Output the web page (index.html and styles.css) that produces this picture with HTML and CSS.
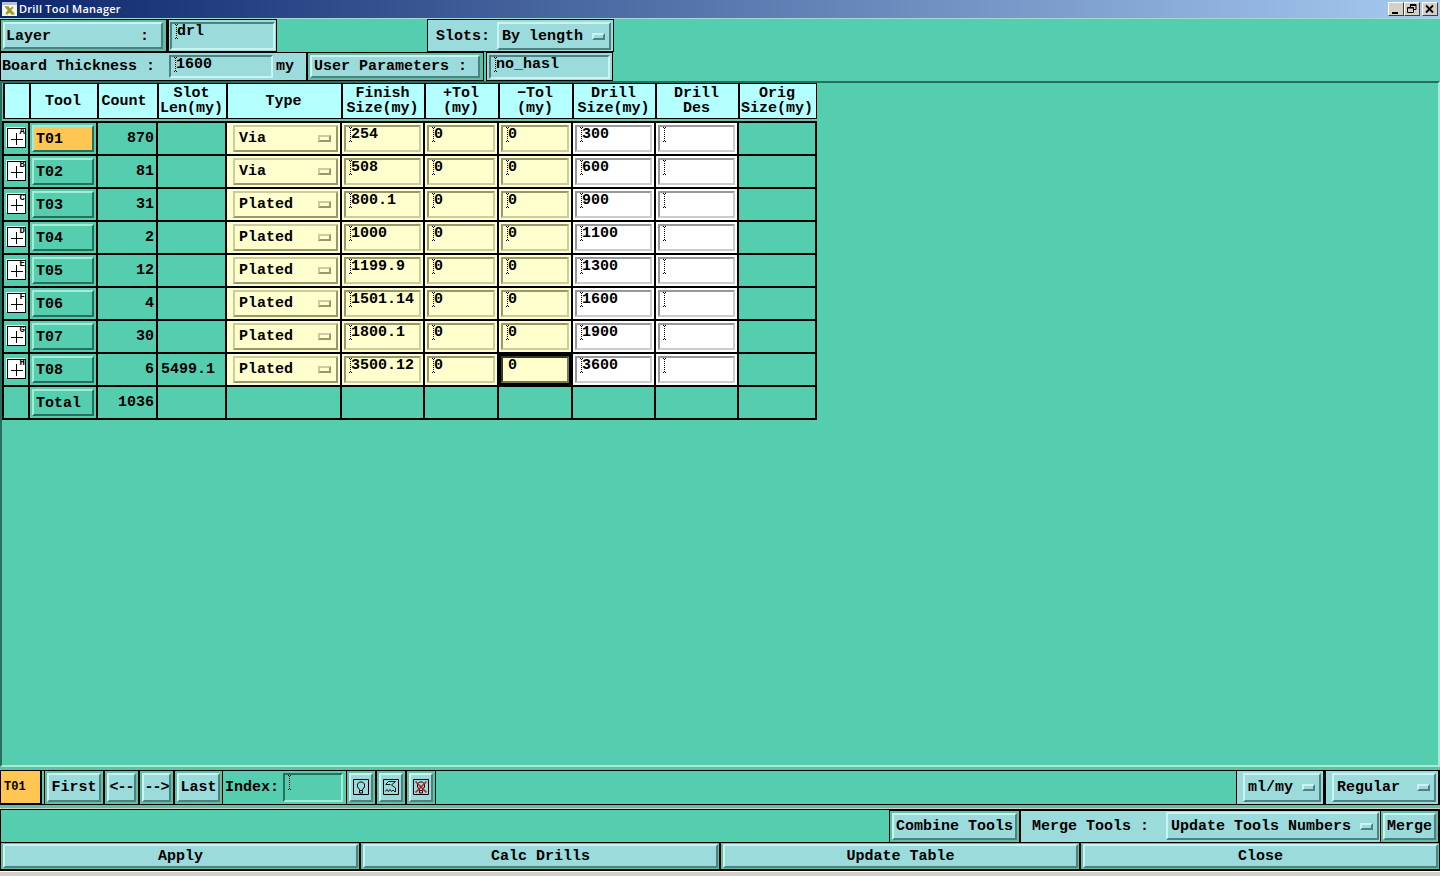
FILE: index.html
```
<!DOCTYPE html>
<html lang="en">
<head>
<meta charset="utf-8">
<title>Drill Tool Manager</title>
<link rel="stylesheet" href="styles.css">
</head>
<body>
<div class="window">
  <header class="titlebar">
    <svg class="app-icon" width="15" height="14" viewBox="0 0 15 14"><rect width="15" height="14" fill="#f4f4f0"/><rect width="15" height="3" fill="#b8c0dc"/><path d="M4 5l3 3-3 4M11 5L8 8l4 4M4 5h2l5 7h-1zM11 5L5 12" stroke="#a39b1c" stroke-width="1.6" fill="none"/></svg>
    <span class="caption">Drill Tool Manager</span>
    <div class="winbuttons">
      <span class="wb"><svg width="14" height="12"><path d="M3 9h6v2H3z"/></svg></span>
      <span class="wb"><svg width="14" height="12"><path d="M5 1.500h6v5H9M5 2.500h6M5.500 1v4M3 5h6M2.500 4.500h6v5h-6z" fill="none" stroke="#000"/></svg></span>
      <span class="wb gap"><svg width="14" height="12"><path d="M3 2.500l7 7M10 2.500l-7 7" stroke="#000" stroke-width="1.800"/></svg></span>
    </div>
  </header>

  <section class="form">
    <div class="form-row first">
      <div class="box layer"><span class="btn">Layer<b>:</b></span></div>
      <div class="box aqua layer-field"><span class="field aq ibeam">drl</span></div>
      <div class="box aqua slots"><span>Slots:</span><span class="btn opt">By length<i class="ind"></i></span></div>
    </div>
    <div class="form-row second">
      <div class="box aqua thick"><span>Board Thickness :</span><span class="field aq ibeam">1600</span><span>my</span></div>
      <div class="box user"><span class="btn">User Parameters :</span></div>
      <div class="box aqua user-field"><span class="field aq ibeam">no_hasl</span></div>
    </div>
  </section>

  <main class="sheet">
    <div class="head grid">
      <span></span><span>Tool</span><span class="count">Count</span><span>Slot<br>Len(my)</span><span>Type</span><span>Finish<br>Size(my)</span><span>+Tol<br>(my)</span><span>−Tol<br>(my)</span><span>Drill<br>Size(my)</span><span>Drill<br>Des</span><span>Orig<br>Size(my)</span>
    </div>
    <div class="rows">
      <div class="row grid"><div class="cell"><span class="sym">A</span></div><div class="cell"><span class="tool sel">T01</span></div><div class="cell num">870</div><div class="cell slot"></div><div class="cell yel type"><span class="yopt">Via<i class="ind"></i></span></div><div class="cell yel"><span class="field ibeam">254</span></div><div class="cell yel"><span class="field ibeam">0</span></div><div class="cell yel"><span class="field ibeam">0</span></div><div class="cell wh"><span class="field ibeam">300</span></div><div class="cell wh"><span class="field ibeam"></span></div><div class="cell"></div></div>
      <div class="row grid"><div class="cell"><span class="sym">B</span></div><div class="cell"><span class="tool">T02</span></div><div class="cell num">81</div><div class="cell slot"></div><div class="cell yel type"><span class="yopt">Via<i class="ind"></i></span></div><div class="cell yel"><span class="field ibeam">508</span></div><div class="cell yel"><span class="field ibeam">0</span></div><div class="cell yel"><span class="field ibeam">0</span></div><div class="cell wh"><span class="field ibeam">600</span></div><div class="cell wh"><span class="field ibeam"></span></div><div class="cell"></div></div>
      <div class="row grid"><div class="cell"><span class="sym">C</span></div><div class="cell"><span class="tool">T03</span></div><div class="cell num">31</div><div class="cell slot"></div><div class="cell yel type"><span class="yopt">Plated<i class="ind"></i></span></div><div class="cell yel"><span class="field ibeam">800.1</span></div><div class="cell yel"><span class="field ibeam">0</span></div><div class="cell yel"><span class="field ibeam">0</span></div><div class="cell wh"><span class="field ibeam">900</span></div><div class="cell wh"><span class="field ibeam"></span></div><div class="cell"></div></div>
      <div class="row grid"><div class="cell"><span class="sym">D</span></div><div class="cell"><span class="tool">T04</span></div><div class="cell num">2</div><div class="cell slot"></div><div class="cell yel type"><span class="yopt">Plated<i class="ind"></i></span></div><div class="cell yel"><span class="field ibeam">1000</span></div><div class="cell yel"><span class="field ibeam">0</span></div><div class="cell yel"><span class="field ibeam">0</span></div><div class="cell wh"><span class="field ibeam">1100</span></div><div class="cell wh"><span class="field ibeam"></span></div><div class="cell"></div></div>
      <div class="row grid"><div class="cell"><span class="sym">E</span></div><div class="cell"><span class="tool">T05</span></div><div class="cell num">12</div><div class="cell slot"></div><div class="cell yel type"><span class="yopt">Plated<i class="ind"></i></span></div><div class="cell yel"><span class="field ibeam">1199.9</span></div><div class="cell yel"><span class="field ibeam">0</span></div><div class="cell yel"><span class="field ibeam">0</span></div><div class="cell wh"><span class="field ibeam">1300</span></div><div class="cell wh"><span class="field ibeam"></span></div><div class="cell"></div></div>
      <div class="row grid"><div class="cell"><span class="sym">F</span></div><div class="cell"><span class="tool">T06</span></div><div class="cell num">4</div><div class="cell slot"></div><div class="cell yel type"><span class="yopt">Plated<i class="ind"></i></span></div><div class="cell yel"><span class="field ibeam">1501.14</span></div><div class="cell yel"><span class="field ibeam">0</span></div><div class="cell yel"><span class="field ibeam">0</span></div><div class="cell wh"><span class="field ibeam">1600</span></div><div class="cell wh"><span class="field ibeam"></span></div><div class="cell"></div></div>
      <div class="row grid"><div class="cell"><span class="sym">G</span></div><div class="cell"><span class="tool">T07</span></div><div class="cell num">30</div><div class="cell slot"></div><div class="cell yel type"><span class="yopt">Plated<i class="ind"></i></span></div><div class="cell yel"><span class="field ibeam">1800.1</span></div><div class="cell yel"><span class="field ibeam">0</span></div><div class="cell yel"><span class="field ibeam">0</span></div><div class="cell wh"><span class="field ibeam">1900</span></div><div class="cell wh"><span class="field ibeam"></span></div><div class="cell"></div></div>
      <div class="row grid"><div class="cell"><span class="sym">H</span></div><div class="cell"><span class="tool">T08</span></div><div class="cell num">6</div><div class="cell slot">5499.1</div><div class="cell yel type"><span class="yopt">Plated<i class="ind"></i></span></div><div class="cell yel"><span class="field ibeam">3500.12</span></div><div class="cell yel"><span class="field ibeam">0</span></div><div class="cell yel"><span class="field focus">0</span></div><div class="cell wh"><span class="field ibeam">3600</span></div><div class="cell wh"><span class="field ibeam"></span></div><div class="cell"></div></div>
      <div class="row grid"><div class="cell"></div><div class="cell"><span class="tool">Total</span></div><div class="cell num">1036</div><div class="cell"></div><div class="cell"></div><div class="cell"></div><div class="cell"></div><div class="cell"></div><div class="cell"></div><div class="cell"></div><div class="cell"></div></div>
    </div>
  </main>

  <section class="nav">
    <div class="current">T01</div>
    <div class="box w-first"><span class="btn">First</span></div>
    <div class="box w-prev"><span class="btn arrow">&lt;--</span></div>
    <div class="box w-next"><span class="btn arrow">--&gt;</span></div>
    <div class="box w-last"><span class="btn">Last</span></div>
    <span class="index">Index:</span>
    <span class="field teal ibeam"></span>
    <div class="box w-i1"><span class="btn"><svg width="16" height="17" viewBox="0 0 16 17"><path class="ln" d="M.5.5h15v15H.5zM6.500 11.500v-1L4.500 8V5l2-2h3l2 2v3l-2 2.500v1zM6.500 12v2h3v-2"/></svg></span></div>
    <div class="box w-i2"><span class="btn"><svg width="16" height="17" viewBox="0 0 16 17"><path class="ln" d="M.5.5h15v15H.5z"/><path class="ln thin" d="M2.500 5.500l3-3h7M3 5.500h4.500M12.500 2.500l-4 3.500 4 3v4M2.500 12.500l1.500-2 1.500 2 1.500-2 1.500 2 1.500-1.500 2 2"/></svg></span></div>
    <div class="box w-i3"><span class="btn"><svg width="16" height="17" viewBox="0 0 16 17"><path class="ln" d="M.5.5h15v15H.5zM6.500 11.500v-1L4.500 8V5l2-2h3l2 2v3l-2 2.500v1zM6.500 12v2h3v-2"/><path d="M2.500 2.500l11 11M13.500 2.500l-11 11" stroke="#c82020" stroke-width="1.700"/></svg></span></div>
    <div class="box aqua units"><span class="btn opt">ml/my<i class="ind"></i></span></div>
    <div class="box aqua mode"><span class="btn opt">Regular<i class="ind"></i></span></div>
  </section>

  <section class="tools">
    <div class="box combine"><span class="btn">Combine Tools</span></div>
    <div class="box aqua merge-by"><span>Merge Tools :</span><span class="btn opt">Update Tools Numbers<i class="ind"></i></span></div>
    <div class="box merge"><span class="btn">Merge</span></div>
  </section>

  <footer class="actions">
    <div><span class="btn">Apply</span></div>
    <div><span class="btn">Calc Drills</span></div>
    <div><span class="btn">Update Table</span></div>
    <div><span class="btn">Close</span></div>
  </footer>
</div>
</body>
</html>
```

FILE: styles.css
```
* { box-sizing: border-box; }
body {
  margin: 0;
  background: #d4d0c8;
  font: bold 15px/15px "Liberation Mono", monospace;
  color: #000;
  overflow: hidden;
}
.window { width: 1440px; height: 876px; display: flex; flex-direction: column; background: #d4d0c8; white-space: pre; }
.window section, .window main, .window header, .window footer, .grid, .rows, .form-row, .cell { white-space: normal; }

.titlebar {
  height: 18px; display: flex; align-items: center; padding: 0 2px 0 2px; gap: 2px;
  background: linear-gradient(90deg, #0c266c, #a6caf0);
  color: #fff;
}
.caption { font: 600 11px/16px "Open Sans", sans-serif; letter-spacing: .24px; flex: 1; }
.winbuttons { display: flex; }
.wb { width: 16px; height: 14px; background: #d4d0c8; border: 1px solid; border-color: #fff #404040 #404040 #fff; }
.wb svg { display: block; }
.wb.gap { margin-left: 2px; }

.box { border: 1px solid #000; padding: 2px; display: flex; align-items: stretch; background: #62bfa5; min-width: 0; }
.aqua { background: #9cdbdb; }
.btn {
  flex: 1; display: flex; align-items: center; justify-content: center; white-space: pre;
  background: #9cdbdb; border: 2px solid; border-color: #c9f4f3 #4e8181 #4e8181 #c9f4f3;
}
.opt { justify-content: space-between; padding: 0 4px 0 3px; }
.ind { width: 13px; height: 7px; border: 2px solid; border-color: #c9f4f3 #4e8181 #4e8181 #c9f4f3; }
.field { position: relative; flex: 1; display: block; padding: 0 0 0 5px; border: 2px solid; white-space: pre; }
.field.aq { border-color: #4e8181 #c9f4f3 #c9f4f3 #4e8181; }
.field.teal { border-color: #276e5c #a6ebd5 #a6ebd5 #276e5c; }
.ibeam::before {
  content: ""; position: absolute; left: 4px; top: 1px; width: 1px; height: 14px;
  background: repeating-linear-gradient(#000 0 1px, transparent 1px 2px);
}
.ibeam::after {
  content: ""; position: absolute; left: 3px; top: 0; width: 3px; height: 15px;
  background: linear-gradient(#000, #000) 0 0/1px 1px no-repeat, linear-gradient(#000, #000) 2px 0/1px 1px no-repeat,
    linear-gradient(#000, #000) 0 14px/1px 1px no-repeat, linear-gradient(#000, #000) 2px 14px/1px 1px no-repeat;
}

.form { height: 63px; background: #54ceaf; border-top: 1px solid #a0dcd0; }
.form-row { display: flex; }
.first { height: 33px; }
.second { height: 29px; }
.layer { width: 167px; border-right-width: 1px; padding-right: 3px; }
.layer .btn { justify-content: space-between; padding: 1px 12px 0 1px; }
.layer-field { width: 110px; border-left-width: 2px; padding: 2px 1px 1px; }
.slots { width: 187px; margin-left: 150px; padding: 2px 2px 1px 8px; }
.slots > span:first-child { align-self: center; width: 61px; }
.thick { width: 307px; padding: 2px 1px; }
.thick > span { align-self: center; white-space: pre; }
.thick > span:first-child { width: 167px; padding-left: 0; }
.thick .field { flex: none; width: 104px; height: 23px; margin-right: 3px; }
.user { width: 177px; padding-right: 3px; }
.user .btn { justify-content: flex-start; padding-left: 2px; }
.user-field { width: 127px; margin-left: 2px; padding: 2px 2px 1px; }

.sheet {
  height: 686px; background: #54ceaf; padding: 0;
  border: 2px solid; border-color: #276e5c #a6ebd5 #a6ebd5 #276e5c;
}
.grid { display: grid; grid-template-columns: 26px 68px 60px 69px 115px 83px 74px 74px 83px 83px 80px; width: 815px; }
.head { height: 36px; grid-template-columns: 26px 68px 60px 69px 115px 83px 74px 74px 83px 83px 78px; margin-left: 1px; width: 814px; border: 1px solid #000; border-left: 0; text-align: center; background: #b4ffff; }
.head span { display: flex; align-items: center; justify-content: center; border-left: 2px solid #000; white-space: nowrap; text-align: center; padding-right: 2px; }
.head .count { padding-right: 8px; }
.rows { margin-top: 1px; width: 815px; border-bottom: 2px solid #000; border-top: 1px solid #66bfa6; }
.row { height: 33px; border-right: 2px solid #000; }
.row.grid { grid-template-columns: 26px 68px 60px 69px 115px 83px 74px 74px 83px 83px 78px; }
.cell { border: solid #000; border-width: 2px 0 0 2px; padding: 2px; display: flex; min-width: 0; }
.yel { background: #ffffce; }
.wh { background: #fff; }
.type { padding-left: 6px; }
.num { justify-content: flex-end; align-items: center; }
.slot { align-items: center; padding-left: 3px; }
.tool { flex: 1; padding: 5px 0 0 2px; border: 2px solid; border-color: #a6ebd5 #276e5c #276e5c #a6ebd5; }
.sel { background: #ffc654; }
.yopt { flex: 1; display: flex; align-items: center; justify-content: space-between; padding: 0 5px 0 4px; border: 2px solid; border-color: #cccca2 #98986e #98986e #cccca2; }
.yopt .ind { border-color: #cccca2 #98986e #98986e #cccca2; }
.yel .field { border-color: #98986e #cccca2 #cccca2 #98986e; }
.wh .field { border-color: #989898 #ccc #ccc #989898; }
.yel .focus { box-shadow: 0 0 0 2px #000; border-color: #39391f #77774e #77774e #39391f; }
.sym {
  position: relative; width: 19px; height: 20px; margin: 3px 0 0 1px; border: 1px solid #000; text-align: right;
  font: bold 9px/7px "Liberation Mono", monospace;
  background: linear-gradient(#000, #000) 8px 4px/1px 12px no-repeat, linear-gradient(#000, #000) 3px 10px/12px 1px no-repeat, #fff;
  box-shadow: -1px -1px 0 #d8fff4;
}

.nav, .tools { display: flex; background: #54ceaf; }
.nav { height: 35px; margin-top: 3px; border: 1px solid #000; border-left-width: 0; box-shadow: 0 -3px #62bfa5, 0 3px #62bfa5; }
.nav .box { margin: -1px 0; }
.nav .field { flex: none; width: 60px; height: 29px; margin: 2px 3px 0 0; }
.current { width: 42px; margin: -1px 2px -1px 0; border: 2px solid #000; border-top-width: 1px; border-left-width: 1px; background: #ffc654; font: bold 12px/33px "Liberation Mono", monospace; padding-left: 3px; }
.w-first { width: 60px; padding: 2px; }
.w-prev { width: 35px; }
.w-next { width: 35px; }
.w-last { width: 49px; }
.arrow { letter-spacing: -1px; }
.index { width: 60px; padding: 9px 0 0 2px; white-space: pre; }
.w-i1, .w-i2, .w-i3 { width: 30px; }
.w-i1 .btn, .w-i2 .btn, .w-i3 .btn { padding-right: 0; }
.ln { fill: none; stroke: #000; }
.thin { stroke-width: .9; }
.units { width: 88px; margin-left: auto !important; padding-left: 6px; }
.mode { width: 115px; padding-left: 6px; border-left-width: 2px; }
.tools { height: 33px; margin-top: 4px; border: 1px solid #000; border-bottom: 0; justify-content: flex-end; }
.combine { width: 131px; border-bottom: 0; }
.merge-by { width: 361px; padding: 1px 1px 2px 11px; border-bottom: 0; border-top-width: 1px; }
.merge-by > span:first-child { align-self: center; width: 134px; white-space: pre; }
.merge { width: 58px; border-bottom: 0; border-left: 0; }
.actions { display: grid; grid-template-columns: repeat(4, 1fr); height: 29px; border-bottom: 1px solid #000; box-shadow: 0 1px #fff; }
.actions div { display: flex; border: 1px solid #000; padding: 1px 1px 1px 2px; background: #62bfa5; }
.actions .btn { padding-top: 1px; }
```
